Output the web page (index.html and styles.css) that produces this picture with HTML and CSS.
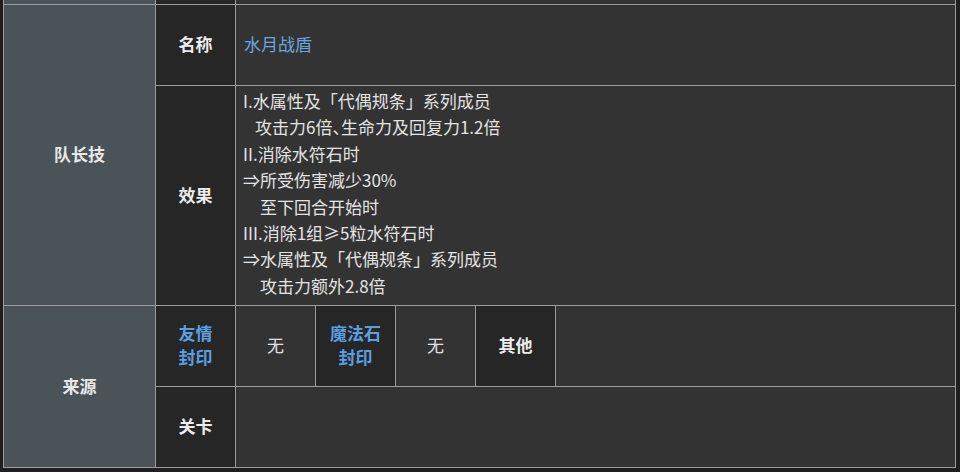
FILE: index.html
```html
<!DOCTYPE html>
<html lang="zh-CN">
<head>
<meta charset="utf-8">
<title>队长技</title>
<link rel="stylesheet" href="styles.css">
</head>
<body>
<div class="wrap">
  <div class="table">
    <div class="cat top"></div>
    <div class="head top"></div>
    <div class="cell top"></div>

    <div class="cat span2">队长技</div>
    <div class="head">名称</div>
    <div class="cell name">水月战盾</div>

    <div class="head">效果</div>
    <div class="cell effect">
      <div>I.水属性及「代偶规条」系列成员</div>
      <div class="ind1">攻击力6倍<span class="pn">、</span>生命力及回复力1.2倍</div>
      <div>II.消除水符石时</div>
      <div>⇒所受伤害减少30%</div>
      <div class="ind2">至下回合开始时</div>
      <div>III.消除1组≥5粒水符石时</div>
      <div>⇒水属性及「代偶规条」系列成员</div>
      <div class="ind2">攻击力额外2.8倍</div>
    </div>

    <div class="cat span2b">来源</div>
    <div class="head blue two">友情<br>封印</div>
    <div class="sub">
      <div class="cell center">无</div>
      <div class="head blue two">魔法石<br>封印</div>
      <div class="cell center">无</div>
      <div class="head">其他</div>
      <div class="cell"></div>
    </div>

    <div class="head">关卡</div>
    <div class="cell"></div>
  </div>
</div>
</body>
</html>
```

FILE: styles.css
```css
html, body {
  margin: 0;
  padding: 0;
  background: #1f1f1f;
  height: 472px;
  overflow: hidden;
}
body {
  font-family: "Noto Sans CJK SC", "Noto Sans", sans-serif;
  font-size: 17px;
  color: #dcdcdc;
}
.wrap {
  margin-left: 3px;
  width: 953px;
}
.table {
  display: grid;
  grid-template-columns: 151px 79px 1fr;
  grid-template-rows: 4px 80px 219px 80px 80px;
  gap: 1px;
  padding: 0 1px 1px 1px;
  background: #9c9c9c;
}
.cat {
  background: #4a5458;
  color: #e8e8e8;
  font-weight: 700;
  display: flex;
  align-items: center;
  justify-content: center;
  padding-bottom: 3px;
}
.span2 { grid-row: 2 / 4; }
.span2b { grid-row: 4 / 6; }
.head {
  background: #262626;
  color: #ececec;
  font-weight: 700;
  display: flex;
  align-items: center;
  justify-content: center;
  text-align: center;
  padding-bottom: 3px;
}
.cell {
  background: #333333;
}
.top { min-height: 0; padding: 0; }
.name {
  display: flex;
  align-items: center;
  padding-left: 8px;
  padding-bottom: 3px;
  color: #6aa6e0;
}
.effect {
  padding: 2px 8px 6px 7px;
  line-height: 26.4px;
  color: #e4e4e4;
}
.pn { font-feature-settings: "halt"; }
.ind1 { padding-left: 12px; }
.ind2 { padding-left: 17px; }
.blue { color: #5a9fe2; }
.two { line-height: 24px; }
.center {
  display: flex;
  align-items: center;
  justify-content: center;
  color: #e0e0e0;
  padding-bottom: 3px;
}
.sub {
  display: grid;
  grid-template-columns: 79px 79px 79px 79px 1fr;
  gap: 1px;
  background: #9c9c9c;
}
```
